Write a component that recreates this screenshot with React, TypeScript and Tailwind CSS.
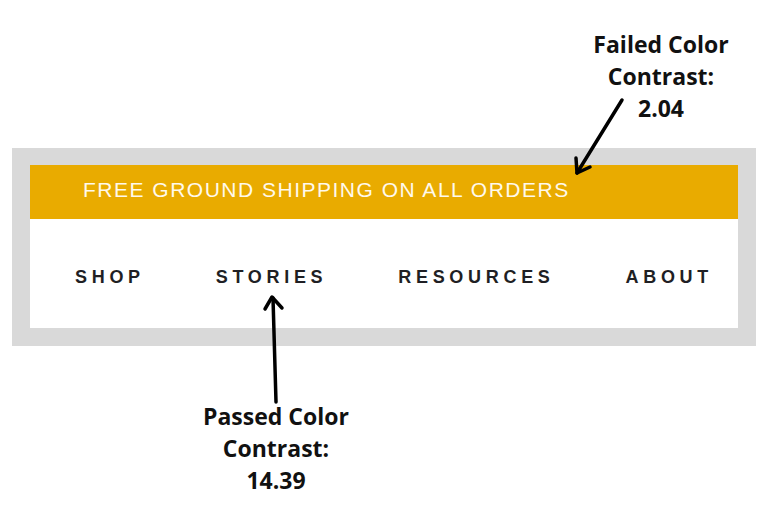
import React from 'react';

const navItems = ['SHOP', 'STORIES', 'RESOURCES', 'ABOUT'];

const Note = ({ lines, className }: { lines: string[]; className: string }) => (
  <div
    className={`text-center text-[23px] leading-[32px] font-bold text-[#111] ${className}`}
    style={{ fontFamily: '"Open Sans", "Noto Sans", sans-serif' }}
  >
    {lines.map((l) => (
      <div key={l}>{l}</div>
    ))}
  </div>
);

const App = () => {
  return (
    <div className="relative w-[768px] h-[531px] bg-white overflow-hidden">
      {/* top annotation */}
      <Note lines={['Failed Color', 'Contrast:', '2.04']} className="w-[200px] ml-[561px] pt-[28px]" />

      {/* the mock header */}
      <div className="mx-[12px] mt-[24px] w-[744px] bg-[#d9d9d9] pt-[17px] pb-[18px] px-[18px]">
        <div
          className="h-[54px] bg-[#e9ab00] flex items-center pl-[53px] pb-[5px] text-[21px] tracking-[1.5px] text-[#fff9ec]"
          style={{ fontFamily: '"Liberation Sans", Arial, sans-serif' }}
        >
          FREE GROUND SHIPPING ON ALL ORDERS
        </div>
        <div
          className="h-[109px] bg-white flex items-center justify-between pl-[45px] pr-[25px] pt-[8px]"
          style={{ fontFamily: '"Liberation Sans", Arial, sans-serif' }}
        >
          {navItems.map((item) => (
            <span key={item} className="text-[18px] font-bold tracking-[4.7px] text-[#1f1f24]">
              {item}
            </span>
          ))}
        </div>
      </div>

      {/* bottom annotation */}
      <Note lines={['Passed Color', 'Contrast:', '14.39']} className="w-[200px] ml-[176px] mt-[54px]" />

      {/* arrows */}
      <svg className="absolute inset-0 pointer-events-none" width="768" height="531" viewBox="0 0 768 531">
        <g fill="none" stroke="#000" strokeWidth="3.5" strokeLinecap="round" strokeLinejoin="round">
          <path d="M622 100 L577 173" />
          <path d="M576 158 L577 173 L590 167" />
          <path d="M276 402 L273 298" />
          <path d="M265 309 L272 297 L282 308" />
        </g>
      </svg>
    </div>
  );
};

export default App;
